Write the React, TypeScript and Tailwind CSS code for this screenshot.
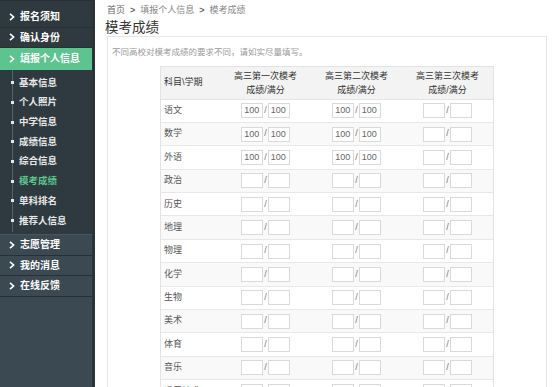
import React from 'react';

const font = { fontFamily: '"Liberation Sans", "Noto Sans CJK SC", sans-serif' };

const subjects = ['语文', '数学', '外语', '政治', '历史', '地理', '物理', '化学', '生物', '美术', '体育', '音乐', '通用技术'];
const filled = ['语文', '数学', '外语'];

function Chevron() {
  return (
    <svg width="6" height="8" viewBox="0 0 6 8" className="shrink-0">
      <path d="M1 0.8 L4.6 4 L1 7.2" fill="none" stroke="#fff" strokeWidth="1.6" />
    </svg>
  );
}

function NavItem({ label, active }: { label: string; active?: boolean }) {
  return (
    <div
      className={
        'flex items-center gap-[5px] pl-[9px] text-[10px] font-bold text-white border-b ' +
        (active ? 'h-[22px] bg-[#5ec48f] border-[#5ec48f]' : 'h-[20.5px] border-[#263035]')
      }
    >
      <Chevron />
      <span>{label}</span>
    </div>
  );
}

function ScoreCell({ value }: { value: boolean }) {
  return (
    <div className="flex items-center justify-center gap-[1px]">
      <div className="w-[22px] h-[15px] border border-[#d9d9d9] bg-white text-[9px] leading-[13px] pl-[2px] text-[#666]">
        {value ? '100' : ''}
      </div>
      <span className="text-[9px] text-[#777]">/</span>
      <div className="w-[22px] h-[15px] border border-[#d9d9d9] bg-white text-[9px] leading-[13px] pl-[2px] text-[#666]">
        {value ? '100' : ''}
      </div>
    </div>
  );
}

export default function App() {
  const sub = ['基本信息', '个人照片', '中学信息', '成绩信息', '综合信息', '模考成绩', '单科排名', '推荐人信息'];
  return (
    <div className="flex w-[556px] h-[387px] overflow-hidden bg-white" style={font}>
      <aside className="w-[95px] h-full flex flex-col bg-[#3b4a52] border-r-[3px] border-[#2a3439]">
        <div className="bg-[#2f3a40] pt-[6px] border-t border-[#263035]">
          <NavItem label="报名须知" />
          <NavItem label="确认身份" />
          <NavItem label="填报个人信息" active />
          <div className="relative pt-[3px] pb-[3px] h-[164px]">
            <div className="absolute left-[12px] top-0 bottom-[2px] w-px bg-[#55626a]" />
            {sub.map((s) => (
              <div key={s} className="relative h-[19.7px] flex items-center pl-[19px] text-[9.5px] font-bold">
                <span className="absolute left-[11px] w-[3px] h-[3px] bg-[#e6e6e6]" />
                <span className={s === '模考成绩' ? 'text-[#5ec48f]' : 'text-[#e8e8e8]'}>{s}</span>
              </div>
            ))}
          </div>
        </div>
        <div className="border-t border-[#465660]">
          <NavItem label="志愿管理" />
          <NavItem label="我的消息" />
          <NavItem label="在线反馈" />
        </div>
      </aside>

      <main className="flex-1 pl-[12px] pr-[9px] flex flex-col">
        <div className="h-[20px] flex items-center gap-[5px] text-[9px] text-[#888] pt-[4px]">
          <span className="text-[#666]">首页</span>
          <span className="text-[#666] font-bold">&gt;</span>
          <span>填报个人信息</span>
          <span className="text-[#666] font-bold">&gt;</span>
          <span>模考成绩</span>
        </div>
        <h1 className="text-[13.5px] leading-[16px] text-[#333] -ml-[2px] h-[18px] pt-[2px]">模考成绩</h1>
        <div className="flex-1 border border-[#e6e6e6] border-b-0">
          <p className="text-[8.5px] text-[#999] pl-[4px] pt-[9px] h-[29px]">不同高校对模考成绩的要求不同，请如实尽量填写。</p>
          <div className="mx-auto w-[334px] border-x border-t border-[#e3e3e3]">
            <div className="grid grid-cols-[59px_1fr_1fr_1fr] h-[33px] bg-[#f3f3f3] border-b border-[#e3e3e3] text-[9px] text-[#333]">
              <div className="flex items-center pl-[3px]">科目\学期</div>
              {['一', '二', '三'].map((n) => (
                <div key={n} className="flex flex-col items-center justify-center leading-[14px]">
                  <span>高三第{n}次模考</span>
                  <span>成绩/满分</span>
                </div>
              ))}
            </div>
            {subjects.map((s, i) => (
              <div
                key={s}
                className={
                  'grid grid-cols-[59px_1fr_1fr_1fr] h-[23.4px] border-b border-[#e8e8e8] items-center ' +
                  (i % 2 === 1 ? 'bg-[#f9f9f9]' : 'bg-white')
                }
              >
                <div className="pl-[3px] text-[9px] text-[#555]">{s}</div>
                <ScoreCell value={filled.includes(s)} />
                <ScoreCell value={filled.includes(s)} />
                <ScoreCell value={false} />
              </div>
            ))}
          </div>
        </div>
      </main>
    </div>
  );
}
